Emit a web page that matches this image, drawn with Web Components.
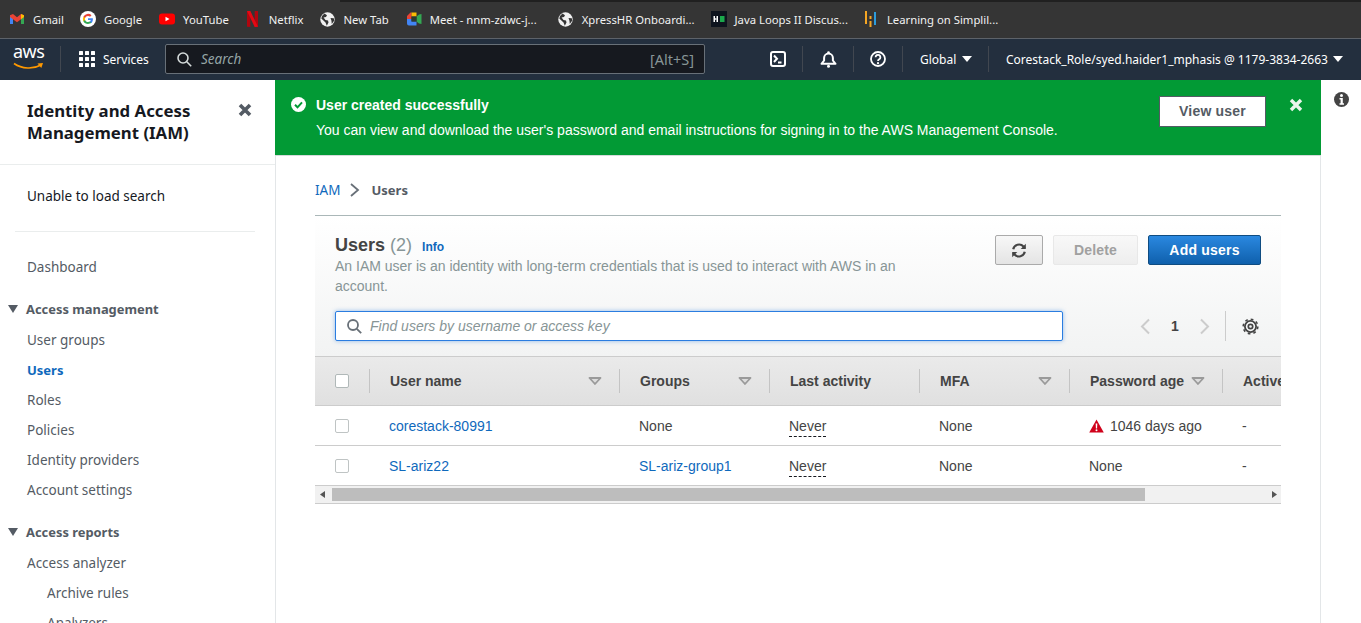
<!DOCTYPE html>
<html lang="en"><head><meta charset="utf-8"><title>IAM Users</title>
<style>
html,body{margin:0;padding:0;height:100%;overflow:hidden;background:#fff;font-family:"Liberation Sans",Arial,sans-serif}
</style></head><body>
<console-shell>
  <bookmark-bar slot="bookmarks">
    <bookmark-item label="Gmail" icon="gmail"></bookmark-item>
    <bookmark-item label="Google" icon="google" extra="1"></bookmark-item>
    <bookmark-item label="YouTube" icon="youtube"></bookmark-item>
    <bookmark-item label="Netflix" icon="netflix"></bookmark-item>
    <bookmark-item label="New Tab" icon="globe" extra="1"></bookmark-item>
    <bookmark-item label="Meet - nnm-zdwc-j..." icon="meet" extra="5"></bookmark-item>
    <bookmark-item label="XpressHR Onboardi..." icon="globe"></bookmark-item>
    <bookmark-item label="Java Loops II Discus..." icon="hr" extra="-1"></bookmark-item>
    <bookmark-item label="Learning on Simplil..." icon="simpli"></bookmark-item>
  </bookmark-bar>
  <aws-nav slot="nav"></aws-nav>
  <iam-sidebar slot="side"></iam-sidebar>
  <flash-banner slot="flash"></flash-banner>
  <page-crumbs slot="main"></page-crumbs>
  <users-panel slot="main"></users-panel>
  <help-rail slot="rail"></help-rail>
</console-shell>
<script>
function def(name,css,html){
  customElements.define(name,class extends HTMLElement{
    connectedCallback(){
      if(this.shadowRoot)return;
      const r=this.attachShadow({mode:'open'});
      const h=typeof html==='function'?html(this):html;
      r.innerHTML='<style>'+css+'</style>'+h;
    }
  });
}
const ICONS={
gmail:'<svg width="16" height="16" viewBox="0 0 16 16"><path d="M1 4v9h3V7z" fill="#4285f4"/><path d="M12 7v6h3V4z" fill="#34a853"/><path d="M1 4.200 4 3l4 3.200L12 3l3 1.200V6l-3 2.300-4 3-4-3L1 6z" fill="#ea4335"/><path d="M12 3l3 1.200V6l-3 2.300z" fill="#fbbc04"/></svg>',
google:'<svg width="16" height="16" viewBox="0 0 16 16"><circle cx="8" cy="8" r="8" fill="#fff"/><path d="M12.900 8.200c0-.4 0-.7-.1-1H8v1.900h2.800c-.1.600-.5 1.200-1 1.500v1.300h1.600c1-.9 1.500-2.200 1.500-3.700z" fill="#4285f4"/><path d="M8 13c1.400 0 2.500-.5 3.400-1.200l-1.600-1.300c-.5.300-1 .5-1.800.5-1.300 0-2.500-.9-2.900-2.100H3.400v1.300C4.200 11.900 6 13 8 13z" fill="#34a853"/><path d="M5.100 8.900C4.900 8.300 4.900 7.700 5.100 7.100V5.800H3.400a5 5 0 0 0 0 4.400z" fill="#fbbc04"/><path d="M8 5c.8 0 1.500.3 2 .8l1.500-1.500A5 5 0 0 0 3.400 5.800l1.700 1.300C5.500 5.900 6.700 5 8 5z" fill="#ea4335"/></svg>',
youtube:'<svg width="16" height="16" viewBox="0 0 16 16"><rect x="0" y="2.500" width="16" height="11" rx="3" fill="#f00"/><path d="M6.500 5.700v4.600L10.500 8z" fill="#fff"/></svg>',
netflix:'<svg width="11" height="16" viewBox="0 0 11 16"><path d="M0 0h3.300v16L0 15.700z" fill="#b1060f"/><path d="M7.700 0H11v15.700L7.700 16z" fill="#b1060f"/><path d="M0 0h3.300l7.700 15.700L7.700 16z" fill="#e50914"/></svg>',
globe:'<svg width="15" height="15" viewBox="0 0 15 15"><circle cx="7.500" cy="7.500" r="7.200" fill="#f1f1f1"/><path d="M4.500 1.500 7 3.300 6 5 3.600 5.400 5.500 8l2.500.5.500 2L6.800 13.800 5.500 10.500 1.300 6.500 2 4zM10.500 6l3.300.2.500 2.300-2.500 3.500-.4-3.500z" fill="#353535"/></svg>',
meet:'<svg width="16" height="16" viewBox="0 0 16 16"><path d="M1 5 4.500 1.500H5.500V8H1z" fill="#ea4335"/><path d="M5.500 1.500H10.500V5.500H5.500z" fill="#fbbc04"/><path d="M1 8h4.500v2.500H10.500v4H3A2 2 0 0 1 1 12.500z" fill="#4285f4"/><path d="M10.500 5.500 13 3.500 15.500 3v10l-2.500-.5-2.500-2z" fill="#34a853"/><path d="M5.500 5.500h5v5h-5z" fill="#2b3a30"/></svg>',
hr:'<svg width="16" height="16" viewBox="0 0 16 16"><rect width="16" height="16" fill="#0e141e"/><rect x="2.500" y="5" width="1.500" height="6" fill="#fff"/><rect x="5.500" y="5" width="1.500" height="6" fill="#fff"/><rect x="4" y="7.300" width="1.500" height="1.400" fill="#fff"/><rect x="9" y="5" width="4.500" height="6" fill="#1ba94c"/></svg>',
simpli:'<svg width="11" height="16" viewBox="0 0 11 16"><rect x="0" y="0" width="2" height="13" fill="#f5a623"/><rect x="4.500" y="5" width="2" height="3" fill="#f5a623"/><rect x="4.500" y="10" width="2" height="6" fill="#f5a623"/><rect x="9" y="1" width="2" height="13" fill="#2d9cdb"/></svg>'
};
def('console-shell',`
:host{display:flex;flex-direction:column;height:100vh;overflow:hidden}
.body{flex:1;display:flex;min-height:0}
.side{width:275px;flex:none;overflow:hidden}
.center{flex:1;min-width:0;display:flex;flex-direction:column}
.content{flex:1;border-left:1px solid #e3e6e8;border-right:1px solid #e3e6e8;padding:0 39px 0 39px;overflow:hidden}
.rail{width:40px;flex:none}
`,`<slot name="bookmarks"></slot><slot name="nav"></slot>
<div class="body"><div class="side"><slot name="side"></slot></div>
<div class="center"><slot name="flash"></slot><div class="content"><slot name="main"></slot></div></div>
<div class="rail"><slot name="rail"></slot></div></div>`);

def('bookmark-bar',`
:host{display:flex;align-items:center;height:38px;background:#353535;padding:0 0 0 1px;position:relative;box-sizing:border-box}
:host::before{content:"";position:absolute;left:340px;right:0;top:0;height:2px;background:#202020}
`,`<slot></slot>`);

def('bookmark-item',`
:host{display:inline-flex;align-items:center;height:28px;padding:0 8px;color:#f1f1f1;font:11.300px "Noto Sans","Open Sans",sans-serif;white-space:nowrap}
.i{display:flex;width:16px;justify-content:center;margin-right:8px}
svg{display:block}
`,h=>`<span class="i">${ICONS[h.getAttribute('icon')]}</span><span style="margin-right:${h.getAttribute('extra')||0}px">${h.getAttribute('label')}</span>`);

const navIcon={
term:'<svg width="16" height="16" viewBox="0 0 16 16" fill="none" stroke="#fff" stroke-width="2"><rect x="1" y="1" width="14" height="14" rx="2"/><path d="M4 4.500 7 7.800 4 11M8 11.500h3.500"/></svg>',
bell:'<svg width="17" height="17" viewBox="0 0 17 17" fill="none" stroke="#fff" stroke-width="2"><path d="M1.500 12.800h14l-2.600-3.300V7A4.400 4.400 0 0 0 4.100 7v2.500z" stroke-linejoin="round"/><circle cx="8.500" cy="15.200" r="1.500" fill="#fff" stroke="none"/><circle cx="8.500" cy="1.500" r="1.300" fill="#fff" stroke="none"/></svg>',
help:'<svg width="16" height="16" viewBox="0 0 16 16" fill="none" stroke="#fff" stroke-width="1.800"><circle cx="8" cy="8" r="7"/><path d="M5.600 6.200a2.400 2.400 0 1 1 3.600 2.100c-.8.500-1.200.8-1.200 1.700"/><circle cx="8" cy="12.200" r="1.100" fill="#fff" stroke="none"/></svg>'
};
def('aws-nav',`
:host{display:flex;align-items:center;height:42px;box-sizing:border-box;background:#232f3e;border-top:1px solid #5d6269;padding-bottom:1px;color:#fff;font:12px "Noto Sans","Open Sans",sans-serif;white-space:nowrap}
.logo{width:61px;flex:none;box-sizing:border-box;padding-left:13px;position:relative;height:26px;border-right:1px solid #414750;font:17px/17px "Noto Sans",sans-serif;letter-spacing:-.5px}
.logo svg{position:absolute;left:13px;top:16px}
.logo span{position:relative;top:-3px;font-size:18px}
.svc{display:flex;align-items:center;gap:8px;margin-left:18px;width:86px;flex:none}
.grid{display:grid;grid-template-columns:repeat(3,4px);gap:2px}
.grid i{width:4px;height:4px;background:#fff;display:block;border-radius:.5px}
.search{width:540px;flex:none;height:30px;box-sizing:border-box;background:#16191f;border:1px solid #687078;border-radius:2px;display:flex;align-items:center;padding:0 10px 0 11px;color:#95a5a6;font-size:13.500px}
.search svg{margin-right:9px}
.search em{flex:1}
.search b{font-weight:400;color:#879596;font-size:14.500px}
.ic{display:flex;justify-content:center;align-items:center;height:26px;border-right:1px solid #414750;flex:none;box-sizing:border-box}
.region{display:flex;align-items:center;padding-left:17px;height:26px;width:86px;flex:none;box-sizing:border-box;border-right:1px solid #414750;gap:6px}
.acct{display:flex;align-items:center;margin-left:17px;gap:5px}
.car{width:0;height:0;border:5px solid transparent;border-top:6px solid #fff;border-bottom:0}
`,`<div class="logo"><span>aws</span><svg width="31" height="9" viewBox="0 0 31 9"><path d="M1 1.500C9 7 20 7.500 28 3" fill="none" stroke="#f90" stroke-width="1.600"/><path d="M24.500 1.500 30 1 28.300 6z" fill="#f90"/></svg></div>
<div class="svc"><span class="grid">${'<i></i>'.repeat(9)}</span><span>Services</span></div>
<div class="search"><svg width="15" height="15" viewBox="0 0 15 15" fill="none" stroke="#d5dbdb" stroke-width="1.600"><circle cx="6" cy="6" r="5"/><path d="m9.800 9.800 4.400 4.400"/></svg><em>Search</em><b>[Alt+S]</b></div>
<div class="ic" style="margin-left:58px;width:40px;justify-content:flex-start;padding-left:7px">${navIcon.term}</div>
<div class="ic" style="width:51px">${navIcon.bell}</div>
<div class="ic" style="width:49px">${navIcon.help}</div>
<div class="region"><span>Global</span><i class="car"></i></div>
<div class="acct"><span>Corestack_Role/syed.haider1_mphasis @ 1179-3834-2663</span><i class="car"></i></div>`);

def('side-link',`
:host{display:block;height:30px;font:13.500px/30px "Noto Sans","Open Sans",sans-serif;color:#545b64;padding-left:27px;white-space:nowrap}
:host([sub]){padding-left:47px}
:host([active]){color:#0f69bc;font-weight:700;font-size:13px}
`,`<slot></slot>`);
def('side-group',`
:host{display:block;margin-top:12px}
.h{display:flex;align-items:center;height:30px;margin-bottom:1px;font:700 12.900px "Noto Sans","Open Sans",sans-serif;color:#545b64;padding-left:8px}
.t{width:0;height:0;border:5.500px solid transparent;border-top:8px solid #545b64;border-bottom:0;margin-right:8px}
`,h=>`<div class="h"><i class="t"></i>${h.getAttribute('label')}</div><slot></slot>`);
def('iam-sidebar',`
:host{display:block;height:100%;overflow:hidden;background:#fff}
.top{height:85px;border-bottom:1px solid #eaeded;box-sizing:border-box;display:flex;justify-content:space-between;padding:20px 23px 0 27px}
h2{margin:0;font:700 16.800px/22px "Noto Sans","Open Sans",sans-serif;color:#16191f}
.x{margin-top:3px}
.s{margin:0 20px 0 15px;height:67px;border-bottom:1px solid #eaeded;box-sizing:border-box;padding:15px 0 0 12px;font:13.500px/32px "Noto Sans","Open Sans",sans-serif;color:#16191f}
.g{height:20px}
`,`<div class="top"><h2>Identity and Access<br>Management (IAM)</h2><svg class="x" width="14" height="14" viewBox="0 0 14 14"><path d="M2 2l10 10M12 2 2 12" stroke="#545b64" stroke-width="3.600"/></svg></div>
<div class="s">Unable to load search</div><div class="g"></div>
<side-link>Dashboard</side-link>
<side-group label="Access management">
<side-link>User groups</side-link><side-link active>Users</side-link><side-link>Roles</side-link><side-link>Policies</side-link><side-link>Identity providers</side-link><side-link>Account settings</side-link>
</side-group>
<side-group label="Access reports">
<side-link>Access analyzer</side-link><side-link sub>Archive rules</side-link><side-link sub>Analyzers</side-link>
</side-group>`);

def('flash-banner',`
:host{display:flex;height:76px;box-sizing:border-box;background:#029a35;border-bottom:1px solid #d5dbdb;color:#fff;font:14px/25px "Liberation Sans",Arial,sans-serif;padding:13px 15px 0 16px}
.c{flex:none;margin:4px 10px 0 0}
.m{flex:1;min-width:0;white-space:nowrap}
b{display:block;font-size:14px;line-height:24px;height:25px}
.btn{flex:none;margin-top:3px;width:107px;height:31px;box-sizing:border-box;background:#fff;border:1px solid #545b64;color:#545b64;font-weight:700;display:flex;align-items:center;justify-content:center;letter-spacing:.2px}
.x{flex:none;margin:5px 3px 0 23px}
`,`<svg class="c" width="15" height="15" viewBox="0 0 15 15"><circle cx="7.500" cy="7.500" r="7.500" fill="#fff"/><path d="m4 7.800 2.500 2.500 4.500-5" fill="none" stroke="#029a35" stroke-width="2"/></svg>
<div class="m"><b>User created successfully</b>You can view and download the user's password and email instructions for signing in to the AWS Management Console.</div>
<div class="btn">View user</div>
<svg class="x" width="14" height="14" viewBox="0 0 14 14"><path d="M2 2l10 10M12 2 2 12" stroke="#e9f6ec" stroke-width="3.400"/></svg>`);

def('page-crumbs',`
:host{display:flex;align-items:center;height:60px;box-sizing:border-box;padding-top:8px;border-bottom:1px solid #aab7b8;font:13.500px "Noto Sans","Open Sans",sans-serif;color:#545b64}
a{color:#0f69bc}
svg{margin:0 11px 0 10px}
b{font-weight:700;font-size:13px}
`,`<a>IAM</a><svg width="10" height="14" viewBox="0 0 10 14" fill="none" stroke="#687078" stroke-width="1.800"><path d="m1 1 7 6-7 6"/></svg><b>Users</b>`);

def('sort-caret',`:host{display:inline-flex}`,`<svg width="14" height="8" viewBox="0 0 14 8"><path d="M1.500 1h11L7 7z" fill="#dcdcdc" stroke="#9a9a9a" stroke-width="1.800" stroke-linejoin="round"/></svg>`);

def('users-panel',`
:host{display:block;font:14px "Liberation Sans",Arial,sans-serif;color:#444}
.head{background:linear-gradient(#fff,#f2f3f3);padding:19px 20px 15px 20px;border-bottom:1px solid #ccc;height:141px;box-sizing:border-box}
.r1{display:flex;justify-content:space-between;height:62px}
h1{margin:0;font:700 18px/20px "Liberation Sans",Arial,sans-serif;color:#444;display:block}
h1 span{font-weight:400;color:#879596}
h1 a{font-size:12px;font-weight:700;color:#0f69bc;margin-left:5px}
p{margin:-1px 0 0;color:#879596;width:600px;line-height:20px;font-size:14px}
.btns{display:flex;gap:10px;align-items:flex-start}
.b{height:30px;box-sizing:border-box;border-radius:2px;display:flex;align-items:center;justify-content:center;font-weight:700;font-size:14px;letter-spacing:.2px}
.rf{width:48px;border:1px solid #aaa;background:linear-gradient(#f7f7f7,#e4e4e4)}
.del{width:85px;border:1px solid #e8e8e8;background:linear-gradient(#f8f8f8,#eee);color:#a0a0a0}
.add{width:113px;border:1px solid #0f4c81;background:linear-gradient(#2a88e0,#0f60ac);color:#fff}
.r2{display:flex;align-items:center;margin-top:14px}
.in{width:728px;flex:none;height:30px;box-sizing:border-box;background:#fff;border:1px solid #2b7de0;border-radius:2px;box-shadow:0 0 4px rgba(43,125,224,.5);display:flex;align-items:center;padding-left:11px;color:#879596;font-style:italic}
.in svg{margin-right:8px}
.pg{display:flex;align-items:center;margin-left:67px;height:30px;color:#444;font-weight:700;font-size:14px;flex:none}
.pg span{width:30px;text-align:center}
.sep{width:1px;height:30px;background:#ccc;margin:0 16px 0 5px}
.tbl{overflow:hidden}
.row{display:grid;grid-template-columns:54px 250px 150px 150px 150px 153px 1fr;align-items:center}
.th{height:48px;background:linear-gradient(#eaeaea,#e0e0e0);border-bottom:1px solid #ccc;font-weight:700;color:#444}
.th>div{height:24px;border-left:1px solid #c4c4c4;display:flex;align-items:center;justify-content:space-between;padding:0 17px 0 20px;box-sizing:border-box;white-space:nowrap}
.th>div:first-child{border:0;padding:0 0 0 20px}
.td{height:40px;border-bottom:1px solid #ccc;box-sizing:border-box;background:#fff}
.td>div{padding-left:20px;white-space:nowrap;display:flex;align-items:center}
.cb{width:14px;height:14px;box-sizing:border-box;background:#fff;border:1px solid #bfc4c4;border-radius:2px;display:block}
a{color:#0f69bc}
.nv{border-bottom:1px dashed #16191f;line-height:16px;margin-top:3px;padding-bottom:2px;height:16px}
.warn{margin-right:6px}
.sb{display:flex;align-items:center;height:18px;box-sizing:border-box;background:#f1f1f1;border-bottom:1px solid #ccc}
.thumb{width:813px;height:13px;background:#bdbdbd;margin-left:3px}
.sp{flex:1}
.ar{width:14px;display:flex;justify-content:center}
`,`<div class="head">
<div class="r1"><div><h1>Users <span>(2)</span> <a>Info</a></h1><p>An IAM user is an identity with long-term credentials that is used to interact with AWS in an account.</p></div>
<div class="btns"><div class="b rf"><svg width="16" height="15" viewBox="0 0 16 15" fill="none" stroke="#444" stroke-width="2.200"><path d="M2.200 6.300A6 6 0 0 1 12.500 3.500L13.800 5"/><path d="M13.800 8.700A6 6 0 0 1 3.500 11.500L2.200 10"/><path d="M14.800 .8v5.300H9.700z" fill="#444" stroke="none"/><path d="M1.200 14.200V8.900h5.100z" fill="#444" stroke="none"/></svg></div><div class="b del">Delete</div><div class="b add">Add users</div></div></div>
<div class="r2"><div class="in"><svg width="15" height="15" viewBox="0 0 15 15" fill="none" stroke="#687078" stroke-width="1.800"><circle cx="6" cy="6" r="5"/><path d="m9.800 9.800 4.400 4.400"/></svg>Find users by username or access key</div>
<div class="pg"><svg width="30" height="17" viewBox="0 0 30 17" fill="none" stroke="#ccc" stroke-width="2"><path d="M19 1.500 12 8.500l7 7"/></svg><span>1</span><svg width="30" height="17" viewBox="0 0 30 17" fill="none" stroke="#ccc" stroke-width="2"><path d="m11 1.500 7 7-7 7"/></svg><i class="sep"></i><svg width="17" height="17" viewBox="0 0 17 17" fill="none" stroke="#444"><circle cx="8.500" cy="8.500" r="5.600" stroke-width="1.800"/><circle cx="8.500" cy="8.500" r="7.300" stroke-width="1.600" stroke-dasharray="2.700 3.030"/><circle cx="8.500" cy="8.500" r="2.200" stroke-width="1.700"/></svg></div></div>
</div>
<div class="tbl">
<div class="row th"><div><i class="cb" style="border-color:#b0b8b8"></i></div><div>User name<sort-caret></sort-caret></div><div>Groups<sort-caret></sort-caret></div><div>Last activity</div><div>MFA<sort-caret></sort-caret></div><div>Password age<sort-caret></sort-caret></div><div>Active</div></div>
<div class="row td"><div><i class="cb"></i></div><div><a>corestack-80991</a></div><div>None</div><div><span class="nv">Never</span></div><div>None</div><div><svg class="warn" width="15" height="14" viewBox="0 0 15 14"><path d="M7.500.5 14.800 13.500H.2z" fill="#d0021b"/><path d="M6.700 4.500h1.600l-.2 5H6.900z" fill="#fff"/><circle cx="7.500" cy="11.200" r="1" fill="#fff"/></svg>1046 days ago</div><div>-</div></div>
<div class="row td"><div><i class="cb"></i></div><div><a>SL-ariz22</a></div><div><a>SL-ariz-group1</a></div><div><span class="nv">Never</span></div><div>None</div><div>None</div><div>-</div></div>
<div class="sb"><span class="ar"><svg width="5" height="7" viewBox="0 0 5 7"><path d="M5 0v7L0 3.500z" fill="#555"/></svg></span><div class="thumb"></div><div class="sp"></div><span class="ar"><svg width="5" height="7" viewBox="0 0 5 7"><path d="M0 0v7l5-3.500z" fill="#555"/></svg></span></div>
</div>`);

def('help-rail',`:host{display:flex;justify-content:center;padding-top:12px}`,`<svg width="15" height="15" viewBox="0 0 15 15"><circle cx="7.500" cy="7.500" r="7.500" fill="#444"/><circle cx="7.500" cy="3.600" r="1.500" fill="#fff"/><path d="M5.500 6h3.300v5.200h1.200v1.500H5.500v-1.500h1.100V7.500H5.500z" fill="#fff"/></svg>`);
</script>
</body></html>
